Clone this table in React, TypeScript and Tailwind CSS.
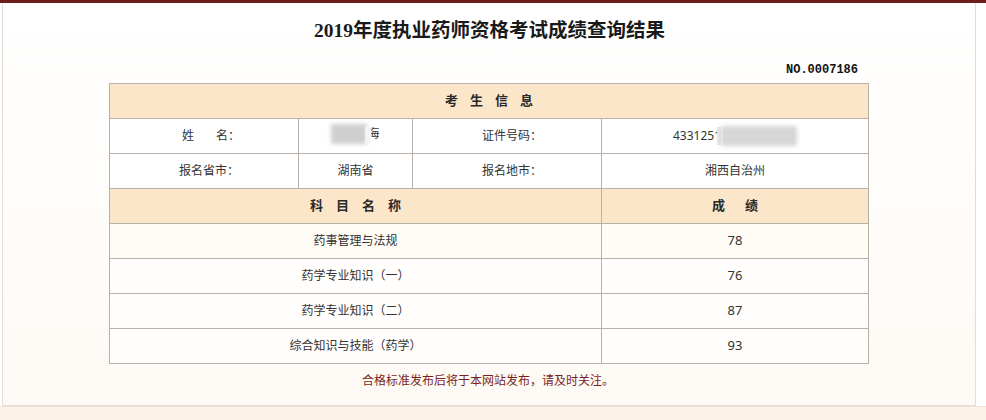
import React from "react";

// ─── DATA ────────────────────────────────────────────────────────────────────

const SUBJECTS: { name: string; score: number }[] = [
  { name: "药事管理与法规", score: 78 },
  { name: "药学专业知识（一）", score: 76 },
  { name: "药学专业知识（二）", score: 87 },
  { name: "综合知识与技能（药学）", score: 93 },
];

const cell = "h-[35px] border border-[#b9b1a7] text-center align-middle p-0";
const headCell = `${cell} bg-[#fce6c9] font-bold text-[13px] text-[#2a2a2a]`;

// ─── BLUR PATCH (masked personal data) ───────────────────────────────────────

function Blur({ w, tone }: { w: number; tone: string }) {
  return (
    <span
      className={`inline-block h-[20px] blur-[2px] ${tone}`}
      style={{ width: w }}
    />
  );
}

// ─── COMPONENT ───────────────────────────────────────────────────────────────

export default function App() {
  return (
    <div
      className="w-[986px] h-[420px] bg-white flex flex-col overflow-hidden text-[#333]"
      style={{ fontFamily: '"Noto Sans", "Noto Sans CJK SC", sans-serif' }}
    >
      {/* top bar */}
      <div className="h-[3px] bg-[#6e1d1d] shrink-0" />

      {/* main frame */}
      <div className="mx-[2px] w-[974px] h-[403px] border-x border-b border-[#e2ddd6] bg-gradient-to-b from-white via-[#fffdfa] to-[#fdfaf5] flex flex-col">
        <h1
          className="mt-[14px] h-[28px] leading-[28px] text-center text-[19.5px] font-bold text-[#1a1a1a] pl-[1px]"
          style={{ fontFamily: '"Liberation Serif", "Noto Sans CJK SC", serif' }}
        >
          2019年度执业药师资格考试成绩查询结果
        </h1>

        <div className="mt-[17px] ml-[106px] w-[759px] flex justify-end pr-[10px]">
          <span
            className="text-[12px] leading-[16px] font-bold text-[#111]"
            style={{ fontFamily: '"Liberation Mono", monospace' }}
          >
            NO.0007186
          </span>
        </div>

        <table className="mt-[5px] ml-[106px] w-[759px] border-collapse table-fixed text-[12px]">
          <colgroup>
            <col className="w-[189px]" />
            <col className="w-[114px]" />
            <col className="w-[189px]" />
            <col className="w-[267px]" />
          </colgroup>
          <tbody>
            <tr>
              <td colSpan={4} className={headCell}>
                <span className="tracking-[12px] pl-[12px]">考生信息</span>
              </td>
            </tr>
            <tr className="bg-white">
              <td className={cell}>
                <span className="inline-flex items-center pl-[14px]">
                  <span>姓</span>
                  <span className="w-[22px]" />
                  <span>名：</span>
                </span>
              </td>
              <td className={cell}>
                <span className="inline-flex items-center">
                  <Blur w={36} tone="bg-[#cfcfcf]" />
                  <span className="relative">
                    海
                    <span className="absolute left-[-2px] top-[2px] w-[6px] h-[16px] bg-[#f4f4f4]" />
                  </span>
                </span>
              </td>
              <td className={cell}>
                <span className="pl-[10px]">证件号码：</span>
              </td>
              <td className={cell}>
                <span className="inline-flex items-center">
                  <span>433125</span>
                  <span className="relative">
                    1
                    <span className="absolute right-0 top-0 w-[4px] h-full bg-[#e6e6e6]" />
                  </span>
                  <Blur w={76} tone="bg-[#d6d6d6]" />
                </span>
              </td>
            </tr>
            <tr className="bg-white">
              <td className={cell}>
                <span className="pl-[10px]">报名省市：</span>
              </td>
              <td className={cell}>湖南省</td>
              <td className={cell}>
                <span className="pl-[10px]">报名地市：</span>
              </td>
              <td className={cell}>湘西自治州</td>
            </tr>
            <tr>
              <td colSpan={3} className={headCell}>
                <span className="tracking-[13px] pl-[13px]">科目名称</span>
              </td>
              <td className={headCell}>
                <span className="tracking-[20px] pl-[20px]">成绩</span>
              </td>
            </tr>
            {SUBJECTS.map((s, i) => (
              <tr key={s.name} className={i === 0 ? "bg-[#fffbf5]" : "bg-[#fffefc]"}>
                <td colSpan={3} className={cell}>{s.name}</td>
                <td className={`${cell} text-[13px]`}>{s.score}</td>
              </tr>
            ))}
          </tbody>
        </table>

        <p className="mt-[9px] h-[16px] leading-[16px] text-center text-[12px] text-[#7a1f1f] pr-[2px]">
          合格标准发布后将于本网站发布，请及时关注。
        </p>
      </div>

      {/* bottom strip */}
      <div className="flex-1 bg-[#fbf1e4] border-t border-[#ece4d8]" />
    </div>
  );
}
